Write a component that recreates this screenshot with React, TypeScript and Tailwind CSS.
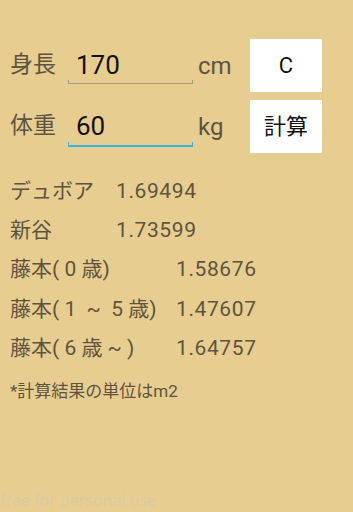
import React from 'react'

const cjk = "font-['Roboto','Noto_Sans_CJK_JP',sans-serif]"

const groupA = [
  { label: 'デュボア', value: '1.69494' },
  { label: '新谷', value: '1.73599' }
]

const groupB = [
  { label: '藤本( 0 歳)', value: '1.58676' },
  { label: '藤本( 1  ~  5 歳)', value: '1.47607' },
  { label: '藤本( 6 歳 ~ )', value: '1.64757' }
]

const InputRow: React.FC<{ label: string; value: string; unit: string; button: string; focused?: boolean }> = ({ label, value, unit, button, focused }) => (
  <div className="flex items-center h-[53px]">
    <div className={`w-[58px] shrink-0 text-[23px] text-[#5c5441] ${cjk}`}>{label}</div>
    <div className="relative w-[125px] shrink-0 h-[53px] flex items-center">
      <span className="pl-[8px] text-[26px] text-[#111] font-['Roboto',sans-serif]">{value}</span>
      {focused ? (
        <div className="absolute left-0 right-0 bottom-[6px] h-[5px] border-[#33b5e5] border-x-[1.5px] border-b-2" />
      ) : (
        <div className="absolute left-0 right-0 bottom-[8px] h-[4px] border-[#a29a84] border-x border-b" />
      )}
    </div>
    <div className="w-[57px] shrink-0 pl-[5px] text-[24px] text-[#5c5441] font-['Roboto',sans-serif]">{unit}</div>
    <div className={`w-[72px] shrink-0 h-[53px] bg-white flex items-center justify-center text-[22px] text-[#111] ${cjk}`}>{button}</div>
  </div>
)

const ResultRow: React.FC<{ label: string; value: string; labelWidth: string }> = ({ label, value, labelWidth }) => (
  <div className="flex items-center h-[39.3px]">
    <div className={`${labelWidth} whitespace-pre text-[21px] text-[#5c5441] ${cjk}`}>{label}</div>
    <div className="text-[21px] tracking-[0.6px] text-[#5c5441] font-['Roboto',sans-serif]">{value}</div>
  </div>
)

const App: React.FC = () => {
  return (
    <div className="w-[353px] h-[512px] bg-[#e8cd90] flex flex-col overflow-hidden">
      <div className="pl-[10px] pt-[39px] flex flex-col gap-[8px]">
        <InputRow label="身長" value="170" unit="cm" button="C" />
        <InputRow label="体重" value="60" unit="kg" button="計算" focused />
      </div>
      <div className="pl-[10px] mt-[19px]">
        {groupA.map((r, i) => (
          <ResultRow key={i} label={r.label} value={r.value} labelWidth="w-[106px]" />
        ))}
        {groupB.map((r, i) => (
          <ResultRow key={i} label={r.label} value={r.value} labelWidth="w-[166px]" />
        ))}
        <div className={`mt-[11px] text-[17px] text-[#5c5441] ${cjk}`}>*計算結果の単位はm2</div>
      </div>
      <div className="mt-auto mb-[2px] text-[16px] leading-[20px] text-[#d8cba2] font-['Open_Sans',sans-serif]">free for personal use</div>
    </div>
  )
}

export default App
